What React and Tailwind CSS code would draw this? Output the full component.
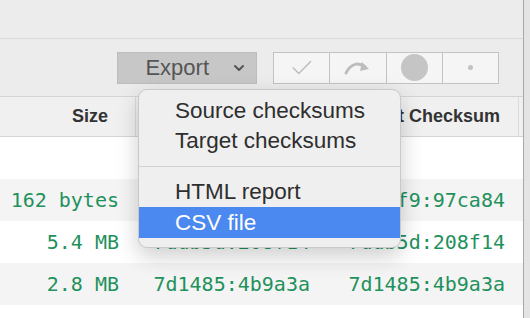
import { Check, ChevronDown } from 'lucide-react';

const rows = [
  { size: '', source: '', target: '' },
  { size: '162 bytes', source: '4e2df9:97ca84', target: '4e2df9:97ca84' },
  { size: '5.4 MB', source: '7ddb5d:208f14', target: '7ddb5d:208f14' },
  { size: '2.8 MB', source: '7d1485:4b9a3a', target: '7d1485:4b9a3a' },
  { size: '3.7 KB', source: '9a01c2:5fe6d0', target: '9a01c2:5fe6d0' },
];

const sans = { fontFamily: '"Liberation Sans", Arial, sans-serif' };

const RedoIcon = () => (
  <svg width="30" height="18" viewBox="0 0 30 18" fill="none">
    <path d="M3 14 C 8 4, 16 3, 22 8" stroke="#bdbdbd" strokeWidth="3" strokeLinecap="round" fill="none" />
    <path d="M19 3 L 26 10 L 17 12 Z" fill="#bdbdbd" />
  </svg>
);

const Menu = () => (
  <div
    className="absolute left-[138px] top-[89px] w-[263px] rounded-[9px] border border-[#c9c9c9] bg-[#efefef] pt-[6px] pb-[9px] text-[22.5px] text-[#2e2e2e] shadow-[0_8px_22px_rgba(0,0,0,0.2)]"
    style={sans}
  >
    <div className="flex h-[30px] items-center pl-[36px]">Source checksums</div>
    <div className="flex h-[30px] items-center pl-[36px]">Target checksums</div>
    <div className="flex h-[20px] items-center">
      <div className="h-px w-full bg-[#d2d2d2]" />
    </div>
    <div className="flex h-[31px] items-center pl-[36px]">HTML report</div>
    <div className="flex h-[31px] items-center bg-[#4b88ef] pl-[36px] text-white">CSV file</div>
  </div>
);

export default function App() {
  return (
    <div className="relative flex h-[318px] w-[530px] overflow-hidden bg-[#e6e6e6]">
      <div className="flex w-[523px] flex-col">
        <div className="h-[39px] shrink-0 border-b border-[#d9d9d9] bg-[#ececec]" />
        <div className="flex h-[57px] shrink-0 items-center bg-[#ececec] pl-[117px]" style={sans}>
          <div className="flex h-[32px] w-[140px] items-center justify-end gap-[22px] border border-[#bdbdbd] bg-[#c7c7c7] pr-[9px] text-[22px] text-[#555]">
            <span>Export</span>
            <ChevronDown size={16} strokeWidth={3} color="#555" />
          </div>
          <div className="ml-[16px] flex h-[32px] w-[226px] border border-[#c3c3c3] bg-[#f5f5f5]">
            <div className="flex flex-1 items-center justify-center border-r border-[#c3c3c3]">
              <Check size={26} strokeWidth={1.4} color="#bdbdbd" />
            </div>
            <div className="flex flex-1 items-center justify-center border-r border-[#c3c3c3]">
              <RedoIcon />
            </div>
            <div className="flex flex-1 items-center justify-center border-r border-[#c3c3c3]">
              <div className="h-[27px] w-[27px] rounded-full bg-[#c5c5c5]" />
            </div>
            <div className="flex flex-1 items-center justify-center">
              <div className="h-[5px] w-[5px] rounded-full bg-[#c2c2c2]" />
            </div>
          </div>
        </div>
        <div
          className="grid h-[41px] shrink-0 grid-cols-[136px_190px_193px_4px] items-center border-y border-[#d4d4d4] bg-[#f0f0f0] text-[18px] font-bold text-[#333]"
          style={sans}
        >
          <div className="h-full border-r border-[#dcdcdc] pr-[27px] text-right leading-[39px]">Size</div>
          <div className="h-full pr-[14px] text-right leading-[39px]">Source Checksum</div>
          <div className="h-full border-r border-[#dcdcdc] pr-[18px] text-right leading-[39px]">Target Checksum</div>
          <div />
        </div>
        <div className="flex flex-col text-[20px] font-medium text-[#1f915c]" style={{ fontFamily: '"DejaVu Sans Mono", "Liberation Mono", monospace' }}>
          {rows.map((r, i) => (
            <div
              key={i}
              className={`grid h-[42px] shrink-0 grid-cols-[136px_190px_193px] items-center ${i % 2 ? 'bg-[#f4f4f4]' : 'bg-white'}`}
            >
              <div className="pr-[17px] text-right">{r.size}</div>
              <div className="pr-[16px] text-right">{r.source}</div>
              <div className="pr-[14px] text-right">{r.target}</div>
            </div>
          ))}
        </div>
      </div>
      <div className="w-px bg-[#a9a9a9]" />
      <div className="flex-1 bg-[#e4e4e4]" />
      <Menu />
    </div>
  );
}
